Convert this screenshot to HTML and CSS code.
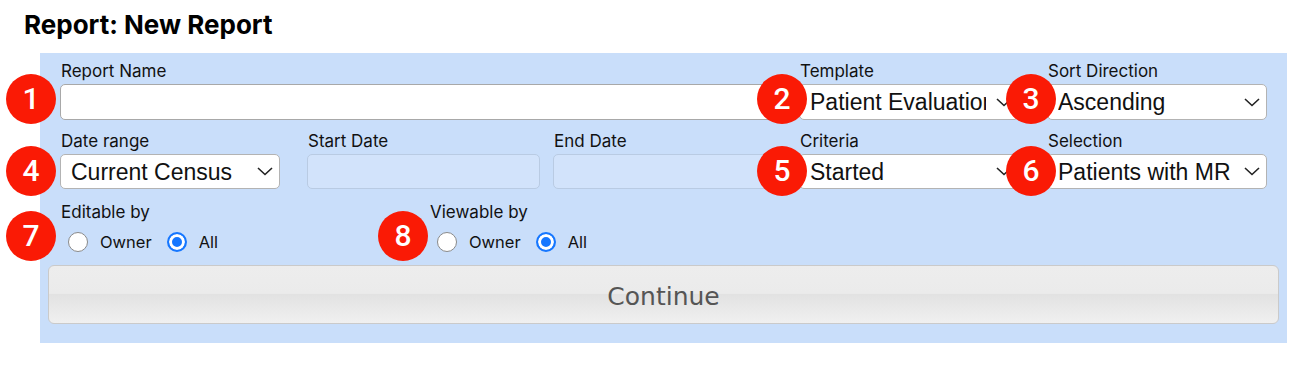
FILE: index.html
```html
<!DOCTYPE html>
<html lang="en">
<head>
  <meta charset="UTF-8" />
  <meta name="viewport" content="width=device-width, initial-scale=1.0"/>
  <title>Report: New Report</title>
  <link rel="stylesheet" href="styles.css">
</head>
<body>
  <div class="page">
    <h1 class="title">Report: New Report</h1>

    <form class="panel">
      <!-- first row: name, template, sort -->
      <div class="row">
        <label class="field field-wide">
          <span class="field-label">Report Name</span>
          <input type="text" class="text-input" />
        </label>
        <label class="field">
          <span class="field-label">Template</span>
          <select class="select"><option>Patient Evaluation</option></select>
        </label>
        <label class="field">
          <span class="field-label">Sort Direction</span>
          <select class="select"><option>Ascending</option></select>
        </label>
      </div>

      <!-- second row: dates, criteria, selection -->
      <div class="row row-mid">
        <label class="field">
          <span class="field-label">Date range</span>
          <select class="select"><option>Current Census</option></select>
        </label>
        <label class="field">
          <span class="field-label">Start Date</span>
          <input type="text" class="date-input" disabled />
        </label>
        <label class="field">
          <span class="field-label">End Date</span>
          <input type="text" class="date-input" disabled />
        </label>
        <label class="field">
          <span class="field-label">Criteria</span>
          <select class="select"><option>Started</option></select>
        </label>
        <label class="field">
          <span class="field-label">Selection</span>
          <select class="select"><option>Patients with MR</option></select>
        </label>
      </div>

      <!-- permissions -->
      <div class="choice-row">
        <div class="choice-group">
          <span class="field-label">Editable by</span>
          <div class="choice-line">
            <label class="choice"><input type="radio" name="editable" /> Owner</label>
            <label class="choice"><input type="radio" name="editable" checked /> All</label>
          </div>
        </div>
        <div class="choice-group">
          <span class="field-label">Viewable by</span>
          <div class="choice-line">
            <label class="choice"><input type="radio" name="viewable" /> Owner</label>
            <label class="choice"><input type="radio" name="viewable" checked /> All</label>
          </div>
        </div>
      </div>

      <button type="button" class="continue-btn">Continue</button>
    </form>

    <!-- numbered callouts -->
    <span class="badge badge-1">1</span>
    <span class="badge badge-2">2</span>
    <span class="badge badge-3">3</span>
    <span class="badge badge-4">4</span>
    <span class="badge badge-5">5</span>
    <span class="badge badge-6">6</span>
    <span class="badge badge-7">7</span>
    <span class="badge badge-8">8</span>
  </div>
</body>
</html>
```

FILE: styles.css
```css
body {
  margin: 0;
  font-family: Inter, "Liberation Sans", sans-serif;
  background: #fff;
  color: #111;
}
.page {
  position: relative;
  padding-top: 10px;
}
.title {
  margin: 0 0 13px 24px;
  font-size: 26px;
  line-height: 30px;
  font-weight: 700;
  color: #000;
}
.panel {
  margin: 0 0 0 40px;
  width: 1247px;
  box-sizing: border-box;
  background: #c9defa;
  padding: 8px 8px 19px;
}
.row {
  display: grid;
  grid-template-columns: 247px 246px 246px 248px 220px;
  padding-left: 12px;
}
.row-mid {
  margin-top: 11px;
}
.field {
  display: block;
}
.field-wide {
  grid-column: 1 / span 3;
}
.field-label {
  display: block;
  font-size: 17px;
  line-height: 20px;
  margin-bottom: 3px;
  padding-left: 1px;
}
.text-input {
  display: block;
  width: 727px;
  height: 36px;
  box-sizing: border-box;
  border: 1px solid #a8a8a8;
  border-radius: 5px;
  background: #fff;
}
.select {
  display: block;
  width: 220px;
  height: 36px;
  box-sizing: border-box;
  appearance: none;
  -webkit-appearance: none;
  border: 1px solid #b3b3b3;
  border-radius: 5px;
  padding: 0 32px 0 10px;
  font-family: "Liberation Sans", Arial, sans-serif;
  font-size: 23px;
  color: #111;
  background: #fff url("data:image/svg+xml;utf8,<svg xmlns='http://www.w3.org/2000/svg' width='16' height='9' viewBox='0 0 16 9'><path d='M1 1 L8 7.5 L15 1' fill='none' stroke='%23222' stroke-width='1.6'/></svg>") no-repeat right 6px center;
}
.row-mid .select {
  height: 35px;
}
.date-input {
  display: block;
  width: 233px;
  height: 35px;
  box-sizing: border-box;
  border: 1px solid #b9cbe3;
  border-radius: 5px;
  background: #d2e3fb;
}
.choice-row {
  display: flex;
  padding-left: 12px;
  margin-top: 13px;
}
.choice-group {
  width: 369px;
}
.choice-group .field-label {
  margin-bottom: 0;
}
.choice-line {
  display: flex;
  align-items: center;
  height: 40px;
  padding-left: 8px;
}
.choice {
  display: flex;
  align-items: center;
  font-size: 16.5px;
  margin-right: 15px;
}
.choice input {
  appearance: none;
  -webkit-appearance: none;
  width: 20px;
  height: 20px;
  margin: 0 12px 0 0;
  box-sizing: border-box;
  border: 1px solid #8a8a8a;
  border-radius: 50%;
  background: #fff;
}
.choice input:checked {
  border: 2px solid #1677ff;
  background: #1677ff;
  box-shadow: inset 0 0 0 3px #fff;
}
.continue-btn {
  display: block;
  margin-top: 3px;
  width: 100%;
  height: 59px;
  padding-top: 4px;
  border: 1px solid #cacaca;
  border-radius: 6px;
  background: linear-gradient(#ededed 0%, #ebebeb 48%, #e2e2e2 50%, #f0f0f0 100%);
  font-family: "DejaVu Sans", Verdana, sans-serif;
  font-size: 25px;
  color: #555;
}

/* callout badges drawn over the form */
.badge {
  position: absolute;
  width: 50px;
  height: 50px;
  border-radius: 50%;
  background: #fa1a05;
  color: #fff;
  font-family: Roboto, "Liberation Sans", sans-serif;
  font-weight: 500;
  font-size: 30px;
  line-height: 50px;
  text-align: center;
}
.badge-1 { left: 6px; top: 74px; }
.badge-2 { left: 757px; top: 74px; }
.badge-3 { left: 1006px; top: 74px; }
.badge-4 { left: 6px; top: 146px; }
.badge-5 { left: 757px; top: 146px; }
.badge-6 { left: 1006px; top: 146px; }
.badge-7 { left: 6px; top: 211px; }
.badge-8 { left: 378px; top: 211px; }
```
